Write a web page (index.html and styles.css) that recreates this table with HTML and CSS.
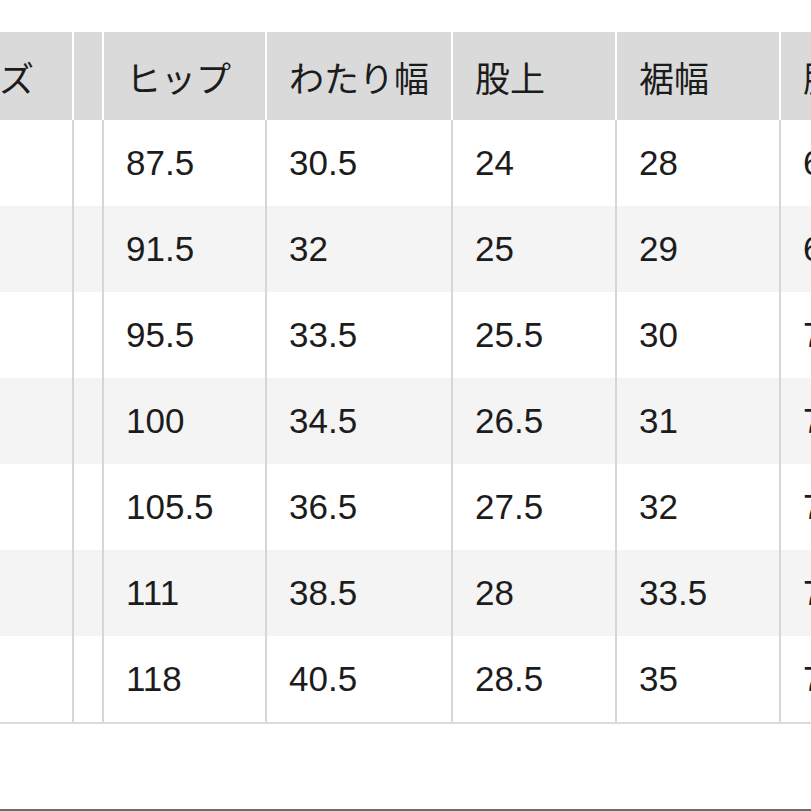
FILE: index.html
```html
<!DOCTYPE html>
<html lang="ja">
<head>
<meta charset="utf-8">
<title>サイズ表</title>
<link rel="stylesheet" href="styles.css">
</head>
<body>
<div class="page">
  <div class="table-wrap">
    <table class="size-table">
      <colgroup>
        <col class="c-size">
        <col class="c-gap">
        <col class="c-hip">
        <col class="c-thigh">
        <col class="c-rise">
        <col class="c-hem">
        <col class="c-inseam">
      </colgroup>
      <thead>
        <tr>
          <th>サイズ</th><th></th><th>ヒップ</th><th>わたり幅</th><th>股上</th><th>裾幅</th><th>股下</th>
        </tr>
      </thead>
      <tbody>
        <tr><td>XS</td><td></td><td>87.5</td><td>30.5</td><td>24</td><td>28</td><td>68</td></tr>
        <tr><td>S</td><td></td><td>91.5</td><td>32</td><td>25</td><td>29</td><td>69</td></tr>
        <tr><td>M</td><td></td><td>95.5</td><td>33.5</td><td>25.5</td><td>30</td><td>70</td></tr>
        <tr><td>L</td><td></td><td>100</td><td>34.5</td><td>26.5</td><td>31</td><td>71</td></tr>
        <tr><td>XL</td><td></td><td>105.5</td><td>36.5</td><td>27.5</td><td>32</td><td>72</td></tr>
        <tr><td>XXL</td><td></td><td>111</td><td>38.5</td><td>28</td><td>33.5</td><td>73</td></tr>
        <tr><td>3XL</td><td></td><td>118</td><td>40.5</td><td>28.5</td><td>35</td><td>74</td></tr>
      </tbody>
    </table>
  </div>
  <div class="bottom-rule"></div>
</div>
</body>
</html>
```

FILE: styles.css
```css
* {
  box-sizing: border-box;
}

html, body {
  margin: 0;
  padding: 0;
  background: #ffffff;
}

.page {
  width: 811px;
  height: 811px;
  overflow: hidden;
  display: flex;
  flex-direction: column;
  font-family: "Liberation Sans", "Noto Sans CJK JP", sans-serif;
  color: #1c1c1c;
}

.table-wrap {
  margin-top: 32px;
  overflow: hidden;
  width: 811px;
}

.size-table {
  margin-left: -92px;
  width: 1035px;
  table-layout: fixed;
  border-collapse: separate;
  border-spacing: 0;
  border-bottom: 2px solid #dcdcdc;
}

.c-size { width: 164px; }
.c-gap { width: 30px; }
.c-hip { width: 163px; }
.c-thigh { width: 186px; }
.c-rise { width: 164px; }
.c-hem { width: 164px; }
.c-inseam { width: 164px; }

.size-table th,
.size-table td {
  text-align: left;
  vertical-align: middle;
  padding: 0 0 0 22px;
  white-space: nowrap;
  overflow: hidden;
  font-weight: normal;
}

.size-table th {
  height: 88px;
  background: #dadada;
  font-size: 35px;
  border-left: 2px solid #ffffff;
}

.size-table td {
  height: 86px;
  font-size: 35px;
  border-left: 2px solid #d6d6d6;
}

.size-table th:first-child,
.size-table td:first-child {
  border-left: none;
}

.size-table tbody tr:nth-child(even) td {
  background: #f4f4f4;
}

.bottom-rule {
  margin-top: auto;
  height: 2px;
  background: #6e6e6e;
  flex-shrink: 0;
}
```
